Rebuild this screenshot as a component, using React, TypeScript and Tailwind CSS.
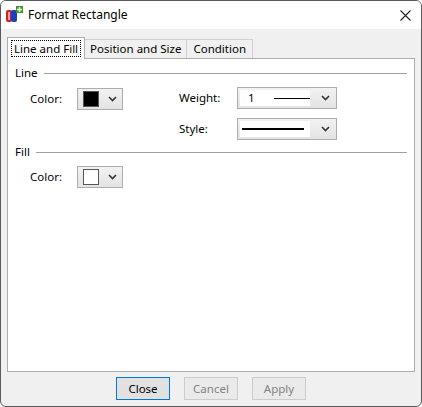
import React from "react";

const Chevron = ({ c = "#333" }: { c?: string }) => (
  <svg width="9" height="6" viewBox="0 0 9 6"><path d="M1 1l3.5 3.5L8 1" stroke={c} strokeWidth="1.6" fill="none" /></svg>
);

const ColorBox = ({ fill }: { fill: string }) => (
  <div className="w-[46px] h-[22px] border border-[#adadad] bg-[linear-gradient(#f2f2f2,#e3e3e3)] flex items-center pl-[5px] gap-[9px]">
    <div className="w-[16px] h-[16px] border border-[#555]" style={{ background: fill }} />
    <Chevron />
  </div>
);

const Combo = ({ children }: { children: React.ReactNode }) => (
  <div className="w-[100px] h-[22px] border border-[#adadad] bg-[linear-gradient(#f2f2f2,#e3e3e3)] flex items-center p-[2px] pr-[6px]">
    <div className="w-[70px] h-full bg-white flex items-center">{children}</div>
    <div className="flex-1" />
    <Chevron />
  </div>
);

export default function App() {
  return (
    <div className="w-[422px] h-[407px] bg-[#f0f0f0] border border-[#5a5a5a] rounded-[6px] overflow-hidden flex flex-col text-[11.5px] text-black" style={{ fontFamily: '"Noto Sans", "Liberation Sans", sans-serif' }}>
      <div className="h-[28px] bg-white flex items-center pl-[4px] pr-[10px] shrink-0">
        <svg width="18" height="18" viewBox="0 0 18 18">
          <rect x="1" y="4" width="6" height="12" rx="2" fill="#d02020" />
          <rect x="6" y="4" width="6" height="12" rx="2" fill="#2040c0" />
          <rect x="3" y="6" width="2" height="8" fill="#fff" opacity=".6" />
          <rect x="11" y="0" width="7" height="7" fill="#3a9a2a" />
          <path d="M14.5 1v5M12 3.5h5" stroke="#fff" strokeWidth="1.5" />
        </svg>
        <span className="ml-[5px] text-[12px]">Format Rectangle</span>
        <div className="flex-1" />
        <svg width="11" height="11" viewBox="0 0 11 11"><path d="M0.5 0.5l10 10M10.5 0.5l-10 10" stroke="#222" strokeWidth="1.1" /></svg>
      </div>
      <div className="flex-1 flex flex-col px-[6px]">
        <div className="flex items-end h-[29px]">
          <div className="h-[22px] px-[3px] border border-[#adadad] border-b-0 bg-white flex items-center relative top-[1px] z-10">
            <span className="border border-dotted border-black px-[2px] leading-[15px]">Line and Fill</span>
          </div>
          <div className="h-[19px] px-[5px] border border-[#d0d0d0] border-b-0 border-l-0 bg-[#f0f0f0] flex items-center">Position and Size</div>
          <div className="h-[19px] px-[6px] border border-[#d0d0d0] border-b-0 border-l-0 bg-[#f0f0f0] flex items-center">Condition</div>
        </div>
        <div className="h-[314px] bg-white border border-[#adadad] px-[7px] pt-[7px]">
          <div className="flex items-center gap-[6px] h-[14px]">
            <span>Line</span><div className="flex-1 h-px bg-[#a0a0a0]" />
          </div>
          <div className="flex mt-[8px]">
            <div className="flex items-start">
              <div className="w-[62px] pl-[15px] h-[22px] flex items-center">Color:</div>
              <ColorBox fill="#000" />
            </div>
            <div className="ml-[56px] flex flex-col gap-[9px] -mt-[1px]">
              <div className="flex items-center">
                <span className="w-[58px]">Weight:</span>
                <Combo>
                  <span className="ml-[8px]">1</span>
                  <div className="ml-[19px] w-[45px] h-px bg-black" />
                </Combo>
              </div>
              <div className="flex items-center">
                <span className="w-[58px]">Style:</span>
                <Combo>
                  <div className="ml-[2px] w-[62px] h-[2px] bg-black" />
                </Combo>
              </div>
            </div>
          </div>
          <div className="flex items-center gap-[6px] h-[14px] mt-[5px]">
            <span>Fill</span><div className="flex-1 h-px bg-[#a0a0a0]" />
          </div>
          <div className="flex items-start mt-[7px]">
            <div className="w-[62px] pl-[15px] h-[22px] flex items-center">Color:</div>
            <ColorBox fill="#fff" />
          </div>
        </div>
        <div className="flex justify-center gap-[14px] pt-[5px]">
          <button className="w-[54px] h-[23px] border border-[#0078d7] bg-[#e1e1e1]">Close</button>
          <button className="w-[54px] h-[23px] border border-[#cccccc] bg-[#eaeaea] text-[#838383]">Cancel</button>
          <button className="w-[54px] h-[23px] border border-[#cccccc] bg-[#eaeaea] text-[#838383]">Apply</button>
        </div>
      </div>
    </div>
  );
}
